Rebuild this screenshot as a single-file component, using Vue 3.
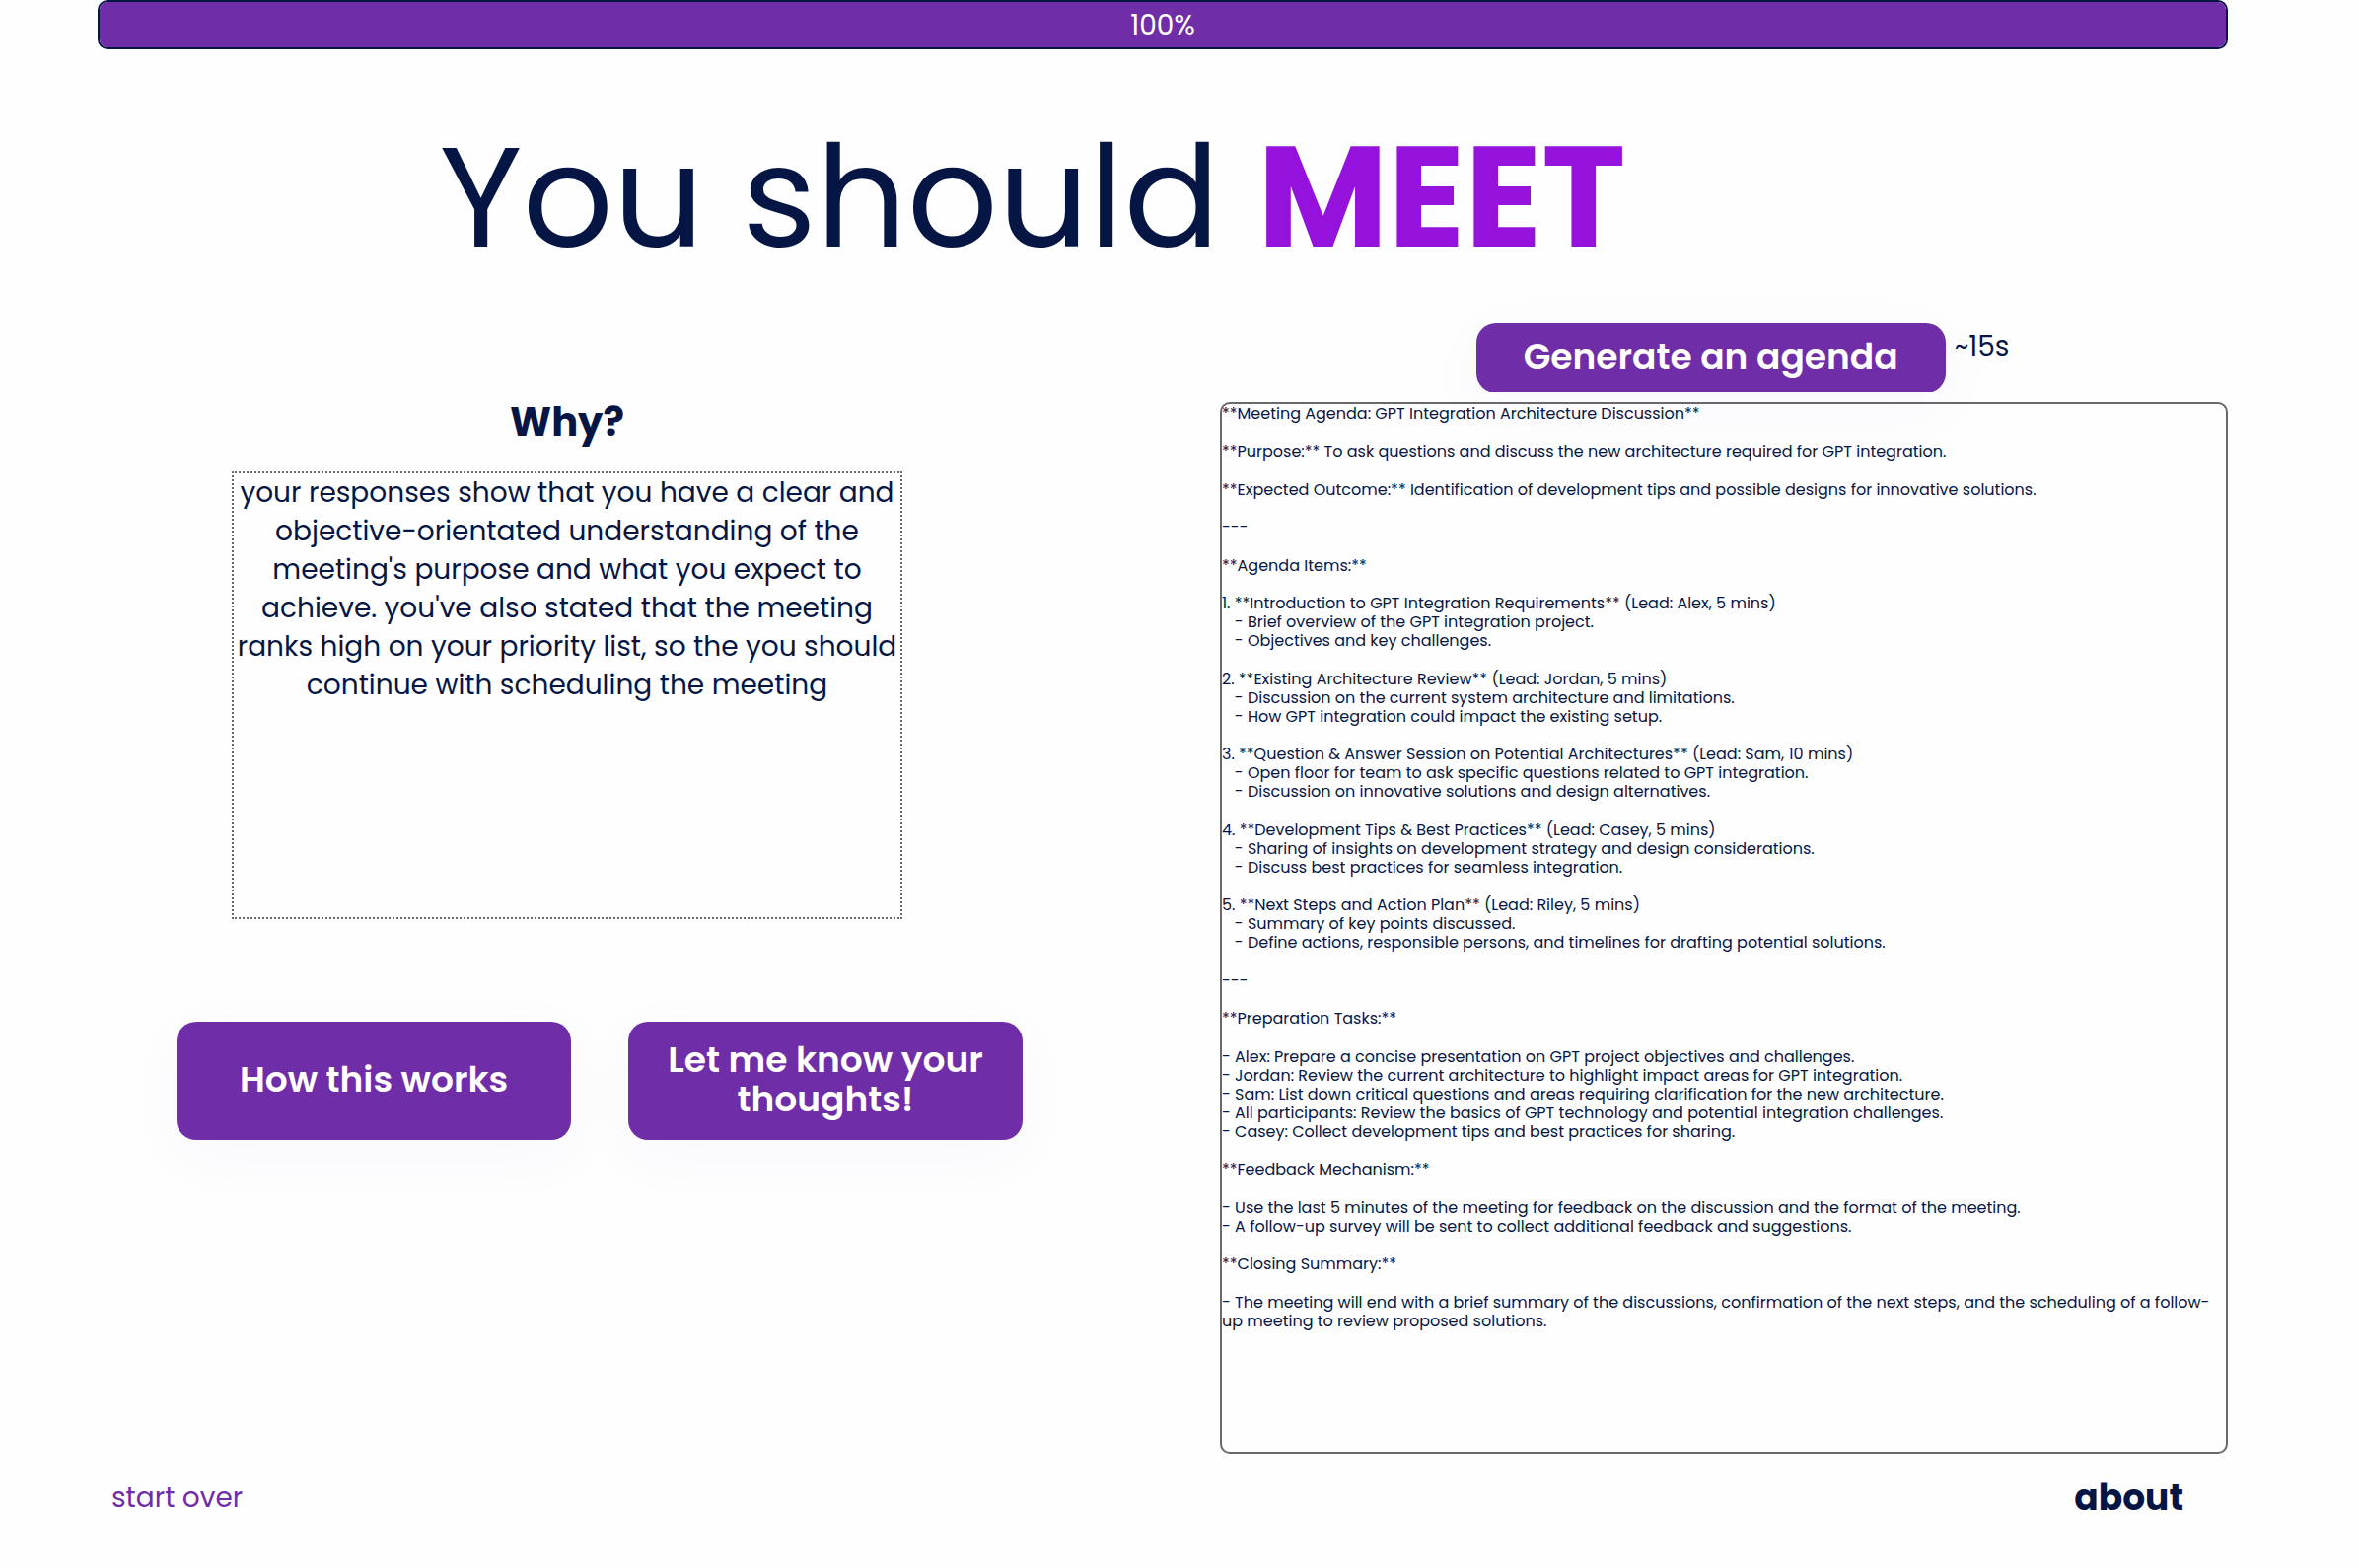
<script setup>
import { ref } from 'vue'

const progress = ref(100)

const agenda = [
  `**Meeting Agenda: GPT Integration Architecture Discussion**

**Purpose:** To ask questions and discuss the new architecture required for GPT integration.`,
  `**Expected Outcome:** Identification of development tips and possible designs for innovative solutions.

---`,
  `**Agenda Items:**

1. **Introduction to GPT Integration Requirements** (Lead: Alex, 5 mins)
   - Brief overview of the GPT integration project.
   - Objectives and key challenges.`,
  `2. **Existing Architecture Review** (Lead: Jordan, 5 mins)
   - Discussion on the current system architecture and limitations.
   - How GPT integration could impact the existing setup.

3. **Question & Answer Session on Potential Architectures** (Lead: Sam, 10 mins)
   - Open floor for team to ask specific questions related to GPT integration.
   - Discussion on innovative solutions and design alternatives.`,
  `4. **Development Tips & Best Practices** (Lead: Casey, 5 mins)
   - Sharing of insights on development strategy and design considerations.
   - Discuss best practices for seamless integration.

5. **Next Steps and Action Plan** (Lead: Riley, 5 mins)
   - Summary of key points discussed.
   - Define actions, responsible persons, and timelines for drafting potential solutions.`,
  `---

**Preparation Tasks:**`,
  `- Alex: Prepare a concise presentation on GPT project objectives and challenges.
- Jordan: Review the current architecture to highlight impact areas for GPT integration.
- Sam: List down critical questions and areas requiring clarification for the new architecture.
- All participants: Review the basics of GPT technology and potential integration challenges.
- Casey: Collect development tips and best practices for sharing.

**Feedback Mechanism:**`,
  `- Use the last 5 minutes of the meeting for feedback on the discussion and the format of the meeting.
- A follow-up survey will be sent to collect additional feedback and suggestions.

**Closing Summary:**`,
  `- The meeting will end with a brief summary of the discussions, confirmation of the next steps, and the scheduling of a follow-up meeting to review proposed solutions.`,
]
</script>

<template>
  <div class="page">
    <div class="progress" role="progressbar" :aria-valuenow="progress" aria-valuemin="0" aria-valuemax="100">
      <div class="progress-fill" :style="{ width: progress + '%' }">{{ progress }}%</div>
    </div>

    <h1 class="verdict">You should <strong>MEET</strong></h1>

    <main class="columns">
      <section class="reason">
        <div class="why">
          <h2>Why?</h2>
          <p>
            your responses show that you have a clear and objective-orientated understanding of the
            meeting's purpose and what you expect to achieve. you've also stated that the meeting
            ranks high on your priority list, so the you should continue with scheduling the meeting
          </p>
        </div>
        <div class="actions">
          <button type="button" class="btn">How this works</button>
          <button type="button" class="btn">Let me know your thoughts!</button>
        </div>
      </section>

      <section class="agenda">
        <div class="generate">
          <button type="button" class="btn btn-wide">Generate an agenda</button>
          <span class="eta">~15s</span>
        </div>
        <div class="agenda-text">
          <p v-for="(block, i) in agenda" :key="i">{{ block }}</p>
        </div>
      </section>
    </main>

    <footer class="footer">
      <a class="restart" href="#">start over</a>
      <a class="about" href="#about">about</a>
    </footer>
  </div>
</template>

<style>
body {
  background: #fefefe;
}
</style>

<style scoped>
.page {
  padding: 0 133px 48px 99px;
  color: #051645;
  font-family: Poppins, Inter, "Open Sans", sans-serif;
  font-size: 28px;
}

.progress {
  height: 50px;
  box-sizing: border-box;
  border: 2px solid #051645;
  border-radius: 10px;
  overflow: hidden;
}

.progress-fill {
  height: 100%;
  box-sizing: border-box;
  padding-top: 2px;
  background: #6f2da8;
  color: #fff;
  line-height: 44px;
  text-align: center;
}

.verdict {
  margin: 60px 0 38px;
  padding-right: 264px;
  font-size: 144px;
  line-height: 180px;
  font-weight: 400;
  text-align: center;
}

.verdict strong {
  color: #9412dc;
  font-weight: 700;
}

.columns {
  display: grid;
  grid-template-columns: 1056fr 1022fr;
  column-gap: 82px;
}

.why {
  display: flex;
  flex-direction: column;
  align-items: center;
  padding: 75px 104px 0 0;
}

.why h2 {
  margin: 0 0 25px;
  font-size: 40px;
  line-height: 50px;
  font-weight: 700;
}

.why p {
  width: 100%;
  max-width: 680px;
  min-height: 454px;
  box-sizing: border-box;
  margin: 0;
  border: 2px dotted #696969;
  line-height: 39px;
  text-align: center;
}

.actions {
  display: flex;
  justify-content: center;
  gap: 58px;
  margin-top: 104px;
  padding-right: 38px;
}

.btn {
  width: 400px;
  min-height: 120px;
  padding: 0 32px 2px;
  border: 0;
  border-radius: 20px;
  background: #6f2da8;
  box-shadow: 0 16px 60px rgba(111, 45, 168, 0.04);
  color: #fff;
  font-family: inherit;
  font-size: 36px;
  line-height: 40px;
  font-weight: 600;
  cursor: pointer;
}

.btn-wide {
  width: 476px;
  min-height: 70px;
}

.generate {
  display: flex;
  justify-content: center;
  align-items: flex-start;
  gap: 9px;
  padding-left: 38px;
}

.eta {
  margin-top: 9px;
  line-height: 30px;
}

.agenda-text {
  min-height: 1066px;
  box-sizing: border-box;
  margin-top: 10px;
  border: 2px solid #696969;
  border-radius: 10px;
  font-size: 16px;
  line-height: 19px;
}

.agenda-text p {
  margin: 0;
  white-space: pre-wrap;
}

.agenda-text p + p {
  margin-top: 20px;
}

.footer {
  display: flex;
  justify-content: space-between;
  align-items: center;
  margin-top: 22px;
  padding: 0 45px 0 14px;
}

.footer a {
  text-decoration: none;
}

.restart {
  color: #6f2da8;
  line-height: 36px;
}

.about {
  color: #051645;
  font-size: 36px;
  line-height: 46px;
  font-weight: 700;
}
</style>
